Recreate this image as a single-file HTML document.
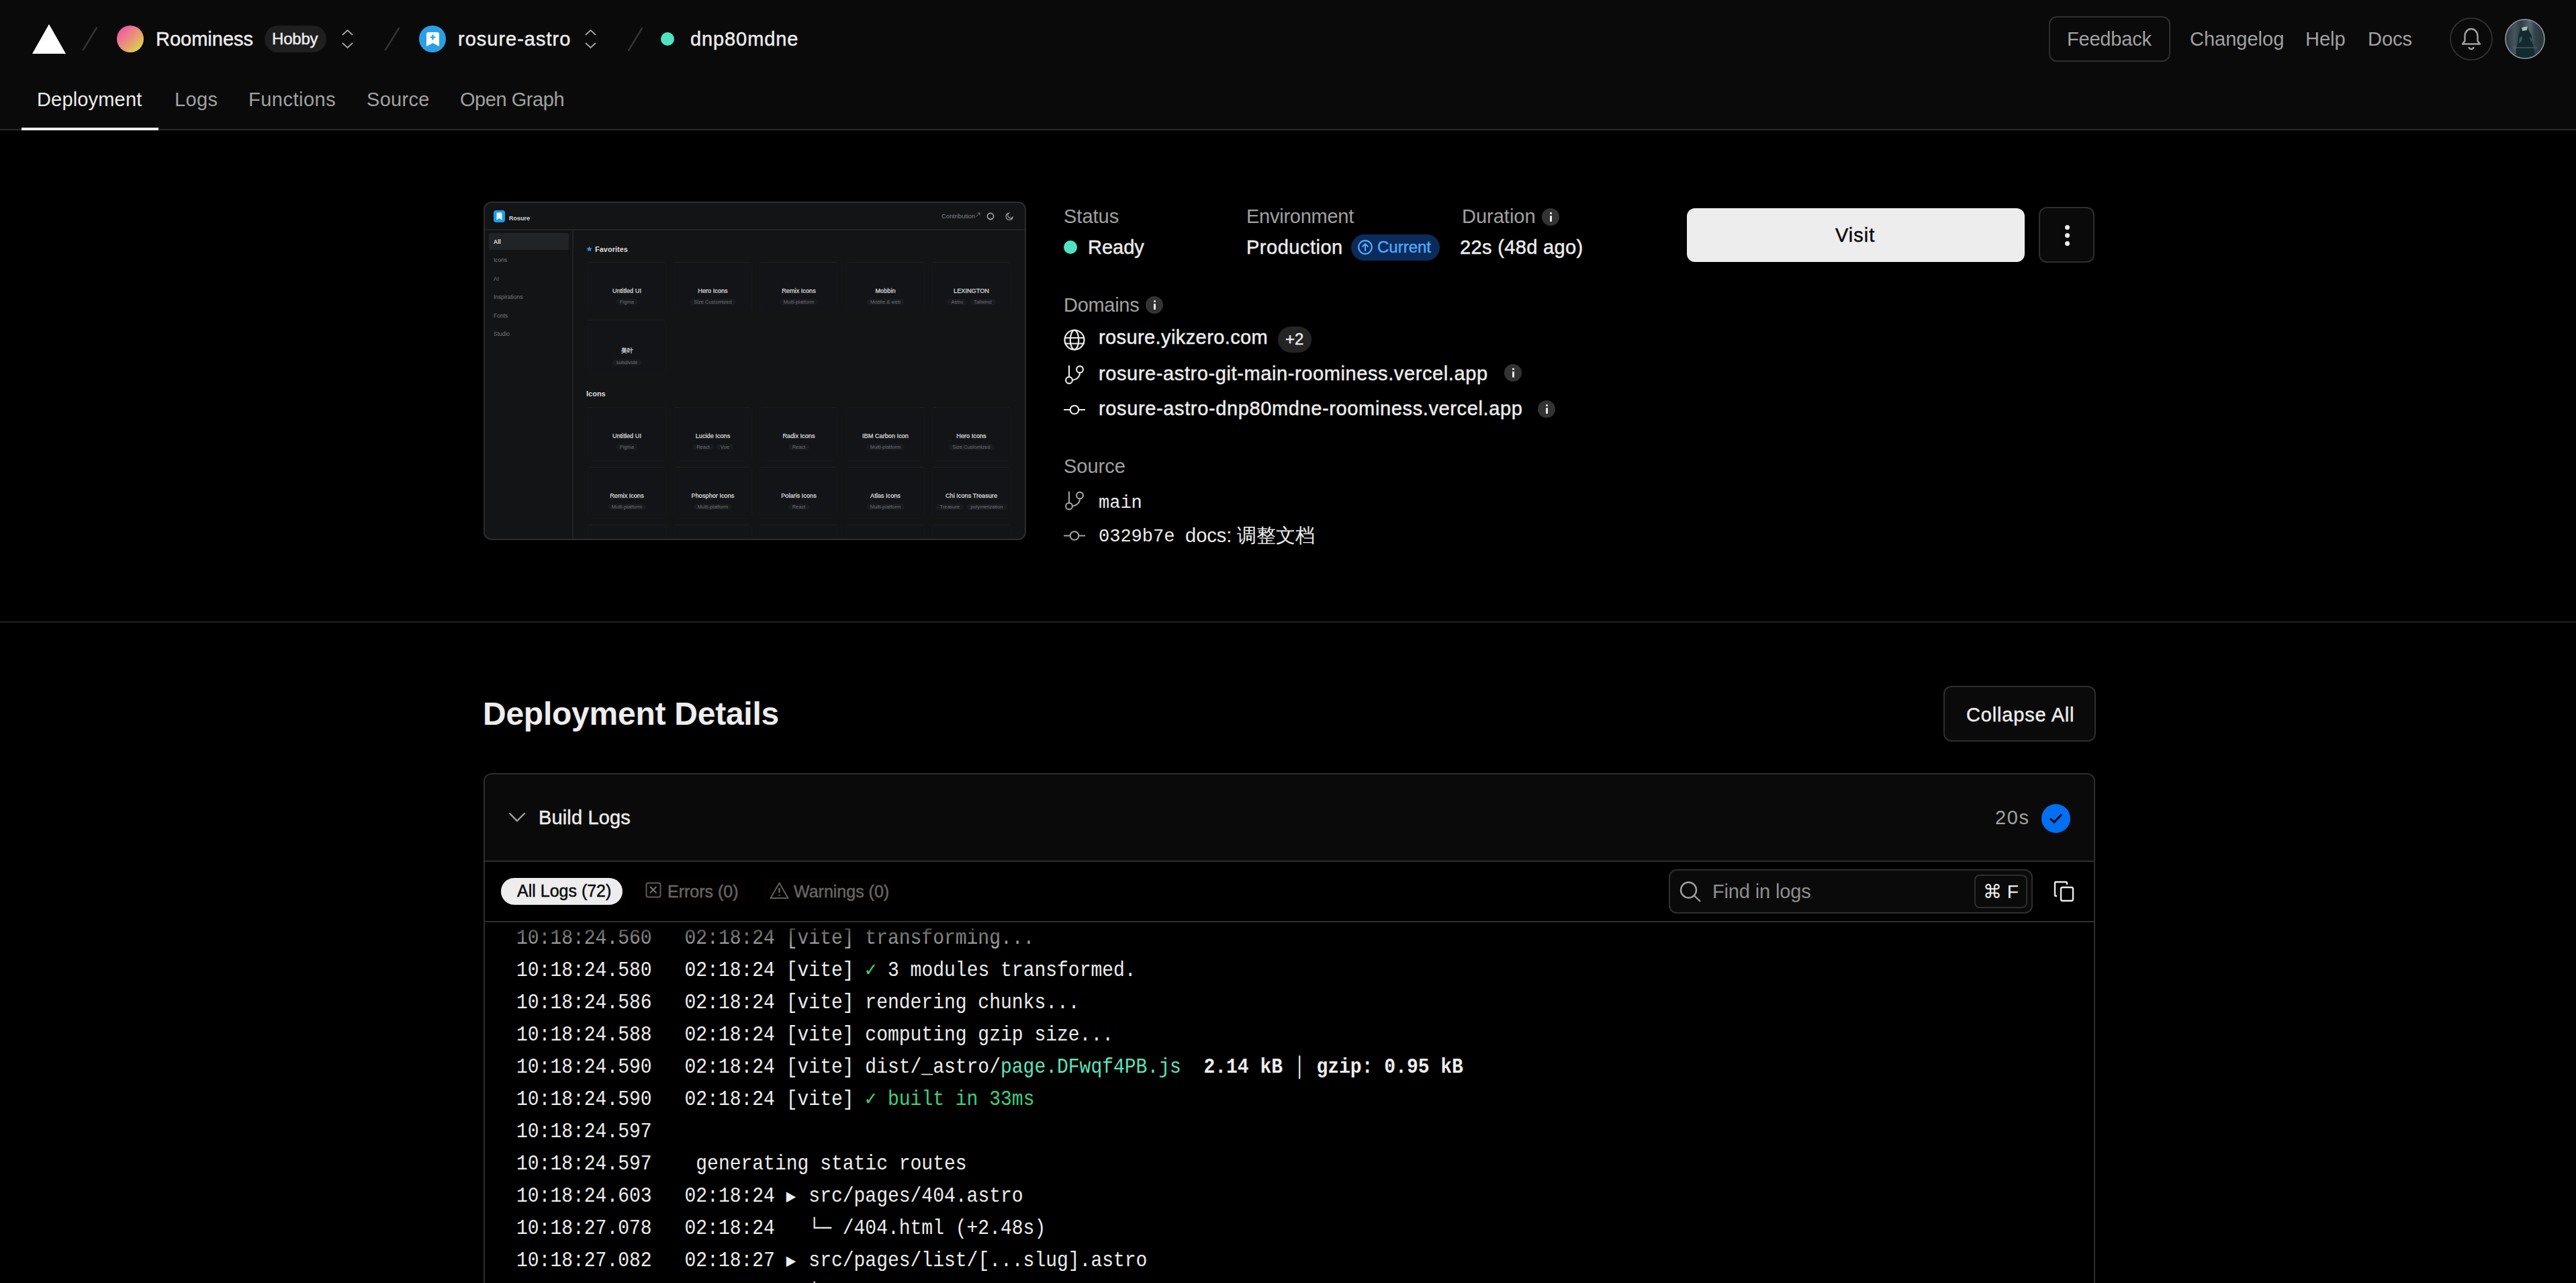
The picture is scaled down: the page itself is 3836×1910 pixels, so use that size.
<!DOCTYPE html>
<html><head><meta charset="utf-8">
<style>
*{box-sizing:border-box;margin:0;padding:0}
html,body{width:3836px;height:1910px;overflow:hidden;background:#000}
body{position:relative;font-family:"Liberation Sans",sans-serif;color:#ededed}
.a{position:absolute}
.t{position:absolute;line-height:1;white-space:pre}
.s28{font-size:29px}
.m{font-family:"Liberation Mono",monospace}
.md{-webkit-text-stroke:0.45px currentColor}
.g{color:#a1a1a1}
svg{position:absolute;overflow:visible}
#hdr{position:absolute;left:0;top:0;width:3836px;height:194px;background:#0a0a0a;border-bottom:2px solid #2e2e2e}
.info{position:absolute;width:26px;height:26px;border-radius:50%;background:#333}
.info:before{content:"";position:absolute;left:12px;top:6px;width:2.5px;height:2.5px;background:#ededed;border-radius:1px}
.info:after{content:"";position:absolute;left:12px;top:11px;width:2.5px;height:9px;background:#ededed;border-radius:1px}
.btn{position:absolute;border:2px solid #2e2e2e;border-radius:12px;background:#0a0a0a}
</style></head><body>

<div id="hdr">
  <!-- logo -->
  <svg style="left:0;top:0" width="10" height="10"><polygon points="73,36 98,80 48,80" fill="#fff"/></svg>
  <svg style="left:0;top:0" width="10" height="10"><line x1="144" y1="41" x2="124" y2="74" stroke="#333" stroke-width="2.5" stroke-linecap="round"/></svg>
  <div class="a" style="left:174px;top:38px;width:40px;height:40px;border-radius:50%;background:linear-gradient(135deg,#f545b8 0%,#e9907a 50%,#d6ea3c 100%)"></div>
  <div class="t md s28" style="left:232px;top:44px;letter-spacing:0px">Roominess</div>
  <div class="a" style="left:394px;top:38px;width:92px;height:40px;border-radius:20px;background:#1f1f1f"></div>
  <div class="t md" style="left:405px;top:46px;font-size:24px;letter-spacing:-0.2px">Hobby</div>
  <svg style="left:0;top:0" width="10" height="10"><polyline points="510,52 517.5,45 525,52" fill="none" stroke="#a1a1a1" stroke-width="2"/><polyline points="510,64 517.5,71 525,64" fill="none" stroke="#a1a1a1" stroke-width="2"/></svg>
  <svg style="left:0;top:0" width="10" height="10"><line x1="594" y1="42" x2="574" y2="74" stroke="#333" stroke-width="2.5" stroke-linecap="round"/></svg>
  <svg style="left:0;top:0" width="10" height="10"><circle cx="644" cy="58" r="20" fill="#2a9fe6"/><path d="M635,51 q0,-3 3,-3 h13 q3,0 3,3 v18 l-9.5,-5 l-9.5,5 z" fill="#fff"/><path d="M644.5,51.5 v8 M640.5,55.5 h8" stroke="#2a9fe6" stroke-width="2.2"/></svg>
  <div class="t md s28" style="left:682px;top:44px;letter-spacing:1px">rosure-astro</div>
  <svg style="left:0;top:0" width="10" height="10"><polyline points="872,52 879.5,45 887,52" fill="none" stroke="#a1a1a1" stroke-width="2"/><polyline points="872,64 879.5,71 887,64" fill="none" stroke="#a1a1a1" stroke-width="2"/></svg>
  <svg style="left:0;top:0" width="10" height="10"><line x1="956" y1="42" x2="936" y2="75" stroke="#333" stroke-width="2.5" stroke-linecap="round"/></svg>
  <div class="a" style="left:984px;top:48px;width:20px;height:20px;border-radius:50%;background:#50e3c2"></div>
  <div class="t md s28" style="left:1028px;top:44px;letter-spacing:0.9px">dnp80mdne</div>

  <!-- right -->
  <div class="btn" style="left:3051px;top:24px;width:181px;height:68px;background:#0a0a0a"></div>
  <div class="t s28 g" style="left:3078px;top:44px;letter-spacing:-0.2px">Feedback</div>
  <div class="t s28 g" style="left:3261px;top:44px">Changelog</div>
  <div class="t s28 g" style="left:3433px;top:44px">Help</div>
  <div class="t s28 g" style="left:3526px;top:44px">Docs</div>
  <div class="a" style="left:3648px;top:26px;width:64px;height:64px;border-radius:50%;border:2px solid #2e2e2e"></div>
  <svg style="left:0;top:0" width="10" height="10"><path d="M3667,65.5 h26 l-3.5,-4.5 v-7.5 a9.5,10.5 0 0 0 -19,0 v7.5 z" fill="none" stroke="#a1a1a1" stroke-width="2.4" stroke-linejoin="round"/><path d="M3676.5,70 a3.5,3 0 0 0 7,0" fill="none" stroke="#a1a1a1" stroke-width="2.4"/></svg>
  <svg style="left:3730px;top:28px" width="60" height="60" viewBox="0 0 60 60"><defs><linearGradient id="avbg" x1="0" x2="1" y1="0" y2="0"><stop offset="0" stop-color="#2a363d"/><stop offset="0.25" stop-color="#46545c"/><stop offset="0.4" stop-color="#2f3c44"/><stop offset="0.62" stop-color="#56666e"/><stop offset="0.75" stop-color="#34424a"/><stop offset="1" stop-color="#26323a"/></linearGradient><clipPath id="avc"><circle cx="30" cy="30" r="29.5"/></clipPath></defs>
<g clip-path="url(#avc)"><rect width="60" height="60" fill="url(#avbg)"/>
<path d="M24,13 L34,11 L36,18 L40,25 L41,36 L44,44 L45,60 L16,60 L17,44 L19,36 L20,26 Z" fill="#132a30"/>
<path d="M25,13 L34,11 L33,17 L26,18 Z" fill="#a9b8bc"/>
<path d="M22,28 L26,26 L25,33 L21,37Z M37,27 L41,30 L39,35Z" fill="#3c5c62"/>
<path d="M12,43 h36" stroke="#5e6e74" stroke-width="1"/>
</g><circle cx="30" cy="30" r="29" fill="none" stroke="#8d989c" stroke-width="1.6"/></svg>

  <!-- tabs -->
  <div class="t s28" style="left:55px;top:134px;letter-spacing:0.17px">Deployment</div>
  <div class="t s28 g" style="left:260px;top:134px;letter-spacing:0.4px">Logs</div>
  <div class="t s28 g" style="left:370px;top:134px;letter-spacing:0.5px">Functions</div>
  <div class="t s28 g" style="left:546px;top:134px;letter-spacing:0.3px">Source</div>
  <div class="t s28 g" style="left:685px;top:134px;letter-spacing:-0.45px">Open Graph</div>
  <div class="a" style="left:32px;top:190px;width:204px;height:4px;background:#ededed"></div>
</div>

<!-- PREVIEW -->
<div id="preview" class="a" style="left:720px;top:300px;width:808px;height:504px;border:2px solid #2c2c2c;border-radius:12px;background:#131416;overflow:hidden">
<div class="a" style="left:0.0px;top:39.0px;width:804.0px;height:1.5px;background:#222428"></div>
<div class="a" style="left:13.0px;top:11.0px;width:17.0px;height:18.0px;background:#1e9de8;border-radius:4px"></div>
<svg style="left:17px;top:14px" width="9" height="12"><path d="M0.5,1.5 q0,-1 1,-1 h6 q1,0 1,1 v10 l-4,-2.5 l-4,2.5z" fill="#e8f4fc"/></svg>
<div class="t" style="left:36.0px;top:19.4px;font-size:9px;color:#d8d8d8;font-weight:700;">Rosure</div>
<div class="t" style="left:680.0px;top:15.6px;font-size:9.3px;color:#7d7f83;font-weight:400;">Contribution</div>
<svg style="left:731px;top:14px" width="7" height="7"><path d="M0.5,6.5 L6,1 M2.5,1 h3.5 v3.5" stroke="#7d7f83" stroke-width="0.9" fill="none"/></svg>
<svg style="left:747px;top:14px" width="12" height="12"><circle cx="6" cy="6" r="4.6" fill="none" stroke="#a8aaad" stroke-width="1.6"/><path d="M4.3,11 v-2.5 M7.7,11 v-2.5" stroke="#a8aaad" stroke-width="1.2"/></svg>
<svg style="left:775px;top:14px" width="12" height="12"><path d="M5,1.5 a5,5 0 1 0 6,6 a4,4 0 0 1 -6,-6z" fill="none" stroke="#9a9c9f" stroke-width="1.3"/></svg>
<div class="a" style="left:130.0px;top:40.5px;width:1.5px;height:461.5px;background:#1f2124"></div>
<div class="a" style="left:6.0px;top:45.0px;width:119.0px;height:25.0px;background:#212427;border-radius:3px"></div>
<div class="t" style="left:13.0px;top:53.8px;font-size:8.5px;color:#e0e0e0;font-weight:600;">All</div>
<div class="t" style="left:13.0px;top:80.8px;font-size:8.5px;color:#74777b;font-weight:400;">Icons</div>
<div class="t" style="left:13.0px;top:108.8px;font-size:8.5px;color:#74777b;font-weight:400;">AI</div>
<div class="t" style="left:13.0px;top:135.8px;font-size:8.5px;color:#74777b;font-weight:400;">Inspirations</div>
<div class="t" style="left:13.0px;top:163.8px;font-size:8.5px;color:#74777b;font-weight:400;">Fonts</div>
<div class="t" style="left:13.0px;top:190.8px;font-size:8.5px;color:#74777b;font-weight:400;">Studio</div>
<svg style="left:151px;top:64px" width="10" height="10"><polygon points="4.5,0.5 5.8,3.3 8.8,3.5 6.5,5.4 7.3,8.5 4.5,6.8 1.7,8.5 2.5,5.4 0.2,3.5 3.2,3.3" fill="#2f8fe0"/></svg>
<div class="t" style="left:164.0px;top:63.7px;font-size:11px;color:#dcdcdc;font-weight:700;">Favorites</div>
<div class="t" style="left:151.0px;top:278.7px;font-size:11px;color:#dcdcdc;font-weight:700;">Icons</div>
<div class="a" style="left:153.0px;top:88.0px;width:117.0px;height:75.0px;border:1px solid #16171a;border-top-color:#1d1f22;border-radius:4px;background:#131417"></div>
<div class="t" style="left:111.5px;width:200px;text-align:center;top:127.2px;font-size:9.2px;color:#d2d3d4;font-weight:400;-webkit-text-stroke:0.3px #d2d3d4;">Untitled UI</div>
<div class="t" style="left:153.0px;width:117px;text-align:center;top:142.7px;font-size:7.5px"><span style="display:inline-block;padding:1px 6px;margin:0 2px;border-radius:6px;background:#191b1e;color:#6c6f73">Figma</span></div>
<div class="a" style="left:281.0px;top:88.0px;width:117.0px;height:75.0px;border:1px solid #16171a;border-top-color:#1d1f22;border-radius:4px;background:#131417"></div>
<div class="t" style="left:239.5px;width:200px;text-align:center;top:127.2px;font-size:9.2px;color:#d2d3d4;font-weight:400;-webkit-text-stroke:0.3px #d2d3d4;">Hero Icons</div>
<div class="t" style="left:281.0px;width:117px;text-align:center;top:142.7px;font-size:7.5px"><span style="display:inline-block;padding:1px 6px;margin:0 2px;border-radius:6px;background:#191b1e;color:#6c6f73">Size Customized</span></div>
<div class="a" style="left:409.0px;top:88.0px;width:117.0px;height:75.0px;border:1px solid #16171a;border-top-color:#1d1f22;border-radius:4px;background:#131417"></div>
<div class="t" style="left:367.5px;width:200px;text-align:center;top:127.2px;font-size:9.2px;color:#d2d3d4;font-weight:400;-webkit-text-stroke:0.3px #d2d3d4;">Remix Icons</div>
<div class="t" style="left:409.0px;width:117px;text-align:center;top:142.7px;font-size:7.5px"><span style="display:inline-block;padding:1px 6px;margin:0 2px;border-radius:6px;background:#191b1e;color:#6c6f73">Multi-platform</span></div>
<div class="a" style="left:538.0px;top:88.0px;width:117.0px;height:75.0px;border:1px solid #16171a;border-top-color:#1d1f22;border-radius:4px;background:#131417"></div>
<div class="t" style="left:496.5px;width:200px;text-align:center;top:127.2px;font-size:9.2px;color:#d2d3d4;font-weight:400;-webkit-text-stroke:0.3px #d2d3d4;">Mobbin</div>
<div class="t" style="left:538.0px;width:117px;text-align:center;top:142.7px;font-size:7.5px"><span style="display:inline-block;padding:1px 6px;margin:0 2px;border-radius:6px;background:#191b1e;color:#6c6f73">Mobile &amp; web</span></div>
<div class="a" style="left:666.0px;top:88.0px;width:117.0px;height:75.0px;border:1px solid #16171a;border-top-color:#1d1f22;border-radius:4px;background:#131417"></div>
<div class="t" style="left:624.5px;width:200px;text-align:center;top:127.2px;font-size:9.2px;color:#d2d3d4;font-weight:400;-webkit-text-stroke:0.3px #d2d3d4;">LEXINGTON</div>
<div class="t" style="left:666.0px;width:117px;text-align:center;top:142.7px;font-size:7.5px"><span style="display:inline-block;padding:1px 6px;margin:0 2px;border-radius:6px;background:#191b1e;color:#6c6f73">Astro</span><span style="display:inline-block;padding:1px 6px;margin:0 2px;border-radius:6px;background:#191b1e;color:#6c6f73">Tailwind</span></div>
<div class="a" style="left:153.0px;top:174.0px;width:117.0px;height:80.0px;border:1px solid #16171a;border-top-color:#1d1f22;border-radius:4px;background:#131417"></div>
<div class="t" style="left:111.5px;width:200px;text-align:center;top:216.2px;font-size:9.2px;color:#d2d3d4;font-weight:400;-webkit-text-stroke:0.3px #d2d3d4;">美叶</div>
<div class="t" style="left:153.0px;width:117px;text-align:center;top:232.7px;font-size:7.5px"><span style="display:inline-block;padding:1px 6px;margin:0 2px;border-radius:6px;background:#191b1e;color:#6c6f73">subdivide</span></div>
<div class="a" style="left:153.0px;top:304.0px;width:117.0px;height:80.0px;border:1px solid #16171a;border-top-color:#1d1f22;border-radius:4px;background:#131417"></div>
<div class="t" style="left:111.5px;width:200px;text-align:center;top:343.2px;font-size:9.2px;color:#d2d3d4;font-weight:400;-webkit-text-stroke:0.3px #d2d3d4;">Untitled UI</div>
<div class="t" style="left:153.0px;width:117px;text-align:center;top:358.7px;font-size:7.5px"><span style="display:inline-block;padding:1px 6px;margin:0 2px;border-radius:6px;background:#191b1e;color:#6c6f73">Figma</span></div>
<div class="a" style="left:281.0px;top:304.0px;width:117.0px;height:80.0px;border:1px solid #16171a;border-top-color:#1d1f22;border-radius:4px;background:#131417"></div>
<div class="t" style="left:239.5px;width:200px;text-align:center;top:343.2px;font-size:9.2px;color:#d2d3d4;font-weight:400;-webkit-text-stroke:0.3px #d2d3d4;">Lucide Icons</div>
<div class="t" style="left:281.0px;width:117px;text-align:center;top:358.7px;font-size:7.5px"><span style="display:inline-block;padding:1px 6px;margin:0 2px;border-radius:6px;background:#191b1e;color:#6c6f73">React</span><span style="display:inline-block;padding:1px 6px;margin:0 2px;border-radius:6px;background:#191b1e;color:#6c6f73">Vue</span></div>
<div class="a" style="left:409.0px;top:304.0px;width:117.0px;height:80.0px;border:1px solid #16171a;border-top-color:#1d1f22;border-radius:4px;background:#131417"></div>
<div class="t" style="left:367.5px;width:200px;text-align:center;top:343.2px;font-size:9.2px;color:#d2d3d4;font-weight:400;-webkit-text-stroke:0.3px #d2d3d4;">Radix Icons</div>
<div class="t" style="left:409.0px;width:117px;text-align:center;top:358.7px;font-size:7.5px"><span style="display:inline-block;padding:1px 6px;margin:0 2px;border-radius:6px;background:#191b1e;color:#6c6f73">React</span></div>
<div class="a" style="left:538.0px;top:304.0px;width:117.0px;height:80.0px;border:1px solid #16171a;border-top-color:#1d1f22;border-radius:4px;background:#131417"></div>
<div class="t" style="left:496.5px;width:200px;text-align:center;top:343.2px;font-size:9.2px;color:#d2d3d4;font-weight:400;-webkit-text-stroke:0.3px #d2d3d4;">IBM Carbon Icon</div>
<div class="t" style="left:538.0px;width:117px;text-align:center;top:358.7px;font-size:7.5px"><span style="display:inline-block;padding:1px 6px;margin:0 2px;border-radius:6px;background:#191b1e;color:#6c6f73">Multi-platform</span></div>
<div class="a" style="left:666.0px;top:304.0px;width:117.0px;height:80.0px;border:1px solid #16171a;border-top-color:#1d1f22;border-radius:4px;background:#131417"></div>
<div class="t" style="left:624.5px;width:200px;text-align:center;top:343.2px;font-size:9.2px;color:#d2d3d4;font-weight:400;-webkit-text-stroke:0.3px #d2d3d4;">Hero Icons</div>
<div class="t" style="left:666.0px;width:117px;text-align:center;top:358.7px;font-size:7.5px"><span style="display:inline-block;padding:1px 6px;margin:0 2px;border-radius:6px;background:#191b1e;color:#6c6f73">Size Customized</span></div>
<div class="a" style="left:153.0px;top:393.0px;width:117.0px;height:77.0px;border:1px solid #16171a;border-top-color:#1d1f22;border-radius:4px;background:#131417"></div>
<div class="t" style="left:111.5px;width:200px;text-align:center;top:432.2px;font-size:9.2px;color:#d2d3d4;font-weight:400;-webkit-text-stroke:0.3px #d2d3d4;">Remix Icons</div>
<div class="t" style="left:153.0px;width:117px;text-align:center;top:447.7px;font-size:7.5px"><span style="display:inline-block;padding:1px 6px;margin:0 2px;border-radius:6px;background:#191b1e;color:#6c6f73">Multi-platform</span></div>
<div class="a" style="left:281.0px;top:393.0px;width:117.0px;height:77.0px;border:1px solid #16171a;border-top-color:#1d1f22;border-radius:4px;background:#131417"></div>
<div class="t" style="left:239.5px;width:200px;text-align:center;top:432.2px;font-size:9.2px;color:#d2d3d4;font-weight:400;-webkit-text-stroke:0.3px #d2d3d4;">Phosphor Icons</div>
<div class="t" style="left:281.0px;width:117px;text-align:center;top:447.7px;font-size:7.5px"><span style="display:inline-block;padding:1px 6px;margin:0 2px;border-radius:6px;background:#191b1e;color:#6c6f73">Multi-platform</span></div>
<div class="a" style="left:409.0px;top:393.0px;width:117.0px;height:77.0px;border:1px solid #16171a;border-top-color:#1d1f22;border-radius:4px;background:#131417"></div>
<div class="t" style="left:367.5px;width:200px;text-align:center;top:432.2px;font-size:9.2px;color:#d2d3d4;font-weight:400;-webkit-text-stroke:0.3px #d2d3d4;">Polaris Icons</div>
<div class="t" style="left:409.0px;width:117px;text-align:center;top:447.7px;font-size:7.5px"><span style="display:inline-block;padding:1px 6px;margin:0 2px;border-radius:6px;background:#191b1e;color:#6c6f73">React</span></div>
<div class="a" style="left:538.0px;top:393.0px;width:117.0px;height:77.0px;border:1px solid #16171a;border-top-color:#1d1f22;border-radius:4px;background:#131417"></div>
<div class="t" style="left:496.5px;width:200px;text-align:center;top:432.2px;font-size:9.2px;color:#d2d3d4;font-weight:400;-webkit-text-stroke:0.3px #d2d3d4;">Atlas Icons</div>
<div class="t" style="left:538.0px;width:117px;text-align:center;top:447.7px;font-size:7.5px"><span style="display:inline-block;padding:1px 6px;margin:0 2px;border-radius:6px;background:#191b1e;color:#6c6f73">Multi-platform</span></div>
<div class="a" style="left:666.0px;top:393.0px;width:117.0px;height:77.0px;border:1px solid #16171a;border-top-color:#1d1f22;border-radius:4px;background:#131417"></div>
<div class="t" style="left:624.5px;width:200px;text-align:center;top:432.2px;font-size:9.2px;color:#d2d3d4;font-weight:400;-webkit-text-stroke:0.3px #d2d3d4;">Chi Icons Treasure</div>
<div class="t" style="left:666.0px;width:117px;text-align:center;top:447.7px;font-size:7.5px"><span style="display:inline-block;padding:1px 6px;margin:0 2px;border-radius:6px;background:#191b1e;color:#6c6f73">Treasure</span><span style="display:inline-block;padding:1px 6px;margin:0 2px;border-radius:6px;background:#191b1e;color:#6c6f73">polymerization</span></div>
<div class="a" style="left:153.0px;top:479.0px;width:117.0px;height:49.0px;border:1px solid #16171a;border-top-color:#1d1f22;border-radius:4px;background:#131417"></div>
<div class="a" style="left:281.0px;top:479.0px;width:117.0px;height:49.0px;border:1px solid #16171a;border-top-color:#1d1f22;border-radius:4px;background:#131417"></div>
<div class="a" style="left:409.0px;top:479.0px;width:117.0px;height:49.0px;border:1px solid #16171a;border-top-color:#1d1f22;border-radius:4px;background:#131417"></div>
<div class="a" style="left:538.0px;top:479.0px;width:117.0px;height:49.0px;border:1px solid #16171a;border-top-color:#1d1f22;border-radius:4px;background:#131417"></div>
<div class="a" style="left:666.0px;top:479.0px;width:117.0px;height:49.0px;border:1px solid #16171a;border-top-color:#1d1f22;border-radius:4px;background:#131417"></div>
</div>

<!-- INFO -->
<div class="t s28 g" style="left:1584px;top:308px">Status</div>
<div class="t s28 g" style="left:1856px;top:308px;letter-spacing:-0.25px">Environment</div>
<div class="t s28 g" style="left:2177px;top:308px">Duration</div>
<div class="info" style="left:2296px;top:310px"></div>

<div class="a" style="left:1584px;top:358px;width:20px;height:20px;border-radius:50%;background:#50e3c2"></div>
<div class="t md s28" style="left:1620px;top:354px;letter-spacing:0px">Ready</div>
<div class="t md s28" style="left:1856px;top:354px;letter-spacing:0.5px">Production</div>
<div class="a" style="left:2012px;top:349px;width:132px;height:39px;border-radius:20px;background:#0b2c5a"></div>
<svg style="left:0;top:0" width="10" height="10"><circle cx="2033" cy="368" r="9.8" fill="none" stroke="#52a8ff" stroke-width="2.2"/><path d="M2033,374 v-11 M2028.5,367.5 l4.5,-4.5 l4.5,4.5" fill="none" stroke="#52a8ff" stroke-width="2.2"/></svg>
<div class="t md" style="left:2051px;top:356px;font-size:24px;color:#52a8ff;letter-spacing:0px">Current</div>
<div class="t md s28" style="left:2174px;top:354px;letter-spacing:0.35px">22s (48d ago)</div>

<div class="t s28 g" style="left:1584px;top:440px;letter-spacing:-0.3px">Domains</div>
<div class="info" style="left:1706px;top:441px"></div>

<svg style="left:0;top:0" width="10" height="10"><g fill="none" stroke="#ededed" stroke-width="2.2"><circle cx="1600" cy="506" r="14.5"/><ellipse cx="1600" cy="506" rx="6.2" ry="14.5"/><path d="M1585.5,503 h29 M1585.5,511.5 h29"/></g></svg>
<div class="t md s28" style="left:1636px;top:488px;letter-spacing:0.4px">rosure.yikzero.com</div>
<div class="a" style="left:1903px;top:486px;width:50px;height:39px;border-radius:20px;background:#242424"></div>
<div class="t md" style="left:1914px;top:493px;font-size:24px">+2</div>

<svg style="left:0;top:0" width="10" height="10"><g fill="none" stroke="#ededed" stroke-width="2.1"><circle cx="1592" cy="566" r="4.9"/><circle cx="1608" cy="550" r="4.9"/><path d="M1592,561 v-17 M1608,555 q0,9 -11,11"/></g></svg>
<div class="t md s28" style="left:1636px;top:542px;letter-spacing:0.6px">rosure-astro-git-main-roominess.vercel.app</div>
<div class="info" style="left:2240px;top:542px"></div>

<svg style="left:0;top:0" width="10" height="10"><g fill="none" stroke="#ededed" stroke-width="2.1"><circle cx="1600" cy="610" r="6.3"/><path d="M1584,610 h9.6 M1606.4,610 h9.6"/></g></svg>
<div class="t md s28" style="left:1636px;top:594px;letter-spacing:0.63px">rosure-astro-dnp80mdne-roominess.vercel.app</div>
<div class="info" style="left:2290px;top:596px"></div>

<div class="t s28 g" style="left:1584px;top:680px">Source</div>
<svg style="left:0;top:0" width="10" height="10"><g fill="none" stroke="#a1a1a1" stroke-width="2.1"><circle cx="1592" cy="753.5" r="4.9"/><circle cx="1608" cy="737.5" r="4.9"/><path d="M1592,748.5 v-17 M1608,742.5 q0,9 -11,11"/></g></svg>
<div class="t m" style="left:1636px;top:736px;font-size:27px">main</div>
<svg style="left:0;top:0" width="10" height="10"><g fill="none" stroke="#a1a1a1" stroke-width="2.1"><circle cx="1600" cy="797.5" r="6.3"/><path d="M1584,797.5 h9.6 M1606.4,797.5 h9.6"/></g></svg>
<div class="t m" style="left:1636px;top:786px;font-size:27px">0329b7e</div>
<div class="t s28" style="left:1765px;top:783px;letter-spacing:0px">docs: 调整文档</div>

<!-- visit -->
<div class="a" style="left:2512px;top:310px;width:503px;height:80px;border-radius:12px;background:#ededed"></div>
<div class="t md s28" style="left:2733px;top:336px;color:#0a0a0a;letter-spacing:1px">Visit</div>
<div class="btn" style="left:3036px;top:308px;width:83px;height:83px"></div>
<div class="a" style="left:3075px;top:335px;width:7px;height:7px;border-radius:50%;background:#ededed"></div>
<div class="a" style="left:3075px;top:347px;width:7px;height:7px;border-radius:50%;background:#ededed"></div>
<div class="a" style="left:3075px;top:359px;width:7px;height:7px;border-radius:50%;background:#ededed"></div>

<div class="a" style="left:0;top:925px;width:3836px;height:2px;background:#222"></div>

<!-- DETAILS -->
<div class="t" style="left:719px;top:1039px;font-size:48px;font-weight:700;letter-spacing:-0.25px">Deployment Details</div>
<div class="btn" style="left:2894px;top:1021px;width:227px;height:83px"></div>
<div class="t md s28" style="left:2928px;top:1050px;letter-spacing:0.82px">Collapse All</div>

<div id="box" class="a" style="left:720px;top:1151px;width:2400px;height:800px;border:2px solid #2e2e2e;border-radius:12px;overflow:hidden;background:#000">
<div class="a" style="left:0;top:0;width:2397px;height:130px;background:#0a0a0a;border-bottom:2px solid #2e2e2e"></div>
<div class="a" style="left:0;top:218px;width:2397px;height:2px;background:#2e2e2e"></div>
</div>
<svg style="left:0;top:0" width="10" height="10"><polyline points="758.5,1210.5 770,1222 781.5,1210.5" fill="none" stroke="#a1a1a1" stroke-width="2.4"/></svg>
<div class="t md s28" style="left:802px;top:1203px;letter-spacing:0.15px">Build Logs</div>
<div class="t s28 g" style="left:2971px;top:1203px;letter-spacing:1.6px">20s</div>
<div class="a" style="left:3040px;top:1197px;width:43px;height:43px;border-radius:50%;background:#0070f3"></div>
<svg style="left:0;top:0" width="10" height="10"><polyline points="3053,1218.5 3059,1224 3070,1212.5" fill="none" stroke="#000" stroke-width="3"/></svg>

<div class="a" style="left:746px;top:1307px;width:181px;height:40px;border-radius:20px;background:#ededed"></div>
<div class="t md" style="left:770px;top:1313.5px;font-size:25px;color:#0a0a0a;letter-spacing:0px">All Logs (72)</div>
<div class="a" style="left:948px;top:1307px;width:163px;height:40px;border-radius:8px;background:rgba(70,0,0,0.07)"></div>
<svg style="left:0;top:0" width="10" height="10"><rect x="962.5" y="1314.5" width="21" height="21" rx="3" fill="none" stroke="#5a5a5a" stroke-width="2"/><path d="M968,1320 l9.5,9.5 M977.5,1320 l-9.5,9.5" stroke="#777" stroke-width="1.8"/></svg>
<div class="t md" style="left:994px;top:1314.5px;font-size:25px;color:#666">Errors (0)</div>
<div class="a" style="left:1137px;top:1307px;width:191px;height:40px;border-radius:8px;background:rgba(60,30,0,0.06)"></div>
<svg style="left:0;top:0" width="10" height="10"><path d="M1160.5,1314.5 L1173.5,1337 H1147.5 Z" fill="none" stroke="#5e5e5e" stroke-width="2" stroke-linejoin="round"/><path d="M1160.5,1322 v7 M1160.5,1332 v1.5" stroke="#777" stroke-width="2"/></svg>
<div class="t md" style="left:1182px;top:1314.5px;font-size:25px;color:#666">Warnings (0)</div>

<div class="btn" style="left:2485px;top:1294px;width:542px;height:66px"></div>
<svg style="left:0;top:0" width="10" height="10"><circle cx="2514.5" cy="1325" r="11.5" fill="none" stroke="#a1a1a1" stroke-width="2.4"/><path d="M2523,1333.5 L2532,1342" stroke="#a1a1a1" stroke-width="2.4"/></svg>
<div class="t s28" style="left:2550px;top:1313px;color:#8f8f8f;letter-spacing:-0.15px">Find in logs</div>
<div class="a" style="left:2940px;top:1302px;width:79px;height:50px;border:2px solid #2e2e2e;border-radius:8px"></div>
<div class="t" style="left:2953px;top:1314px;font-size:28px;color:#ededed">⌘ F</div>
<svg style="left:0;top:0" width="10" height="10"><g fill="none" stroke="#ededed" stroke-width="2.4" stroke-linejoin="round"><rect x="3069" y="1321" width="18" height="20" rx="2.5"/><path d="M3063,1334 h-1 a2,2 0 0 1 -2,-2 v-17 a2,2 0 0 1 2,-2 h14 a2,2 0 0 1 2,2 v2"/></g></svg>
<div id="logs" class="a" style="left:722px;top:1373px;width:2396px;height:537px;overflow:hidden">
<div class="a" style="left:-722px;top:-1373px;width:3836px;height:1910px">
<div class="t m" style="left:769px;top:1383.85px;font-size:28px;transform:scaleY(1.09);transform-origin:0 21.45px">10:18:24.560</div>
<div class="t m" style="left:1019.5px;top:1383.85px;font-size:28px;transform:scaleY(1.09);transform-origin:0 21.45px"><span style="color:#ededed;">02:18:24 [vite] transforming...</span></div>
<div class="t m" style="left:769px;top:1431.85px;font-size:28px;transform:scaleY(1.09);transform-origin:0 21.45px">10:18:24.580</div>
<div class="t m" style="left:1019.5px;top:1431.85px;font-size:28px;transform:scaleY(1.09);transform-origin:0 21.45px"><span style="color:#ededed;">02:18:24 [vite] </span><span style="color:#3fcf80;">✓</span><span style="color:#ededed;"> 3 modules transformed.</span></div>
<div class="t m" style="left:769px;top:1479.85px;font-size:28px;transform:scaleY(1.09);transform-origin:0 21.45px">10:18:24.586</div>
<div class="t m" style="left:1019.5px;top:1479.85px;font-size:28px;transform:scaleY(1.09);transform-origin:0 21.45px"><span style="color:#ededed;">02:18:24 [vite] rendering chunks...</span></div>
<div class="t m" style="left:769px;top:1527.85px;font-size:28px;transform:scaleY(1.09);transform-origin:0 21.45px">10:18:24.588</div>
<div class="t m" style="left:1019.5px;top:1527.85px;font-size:28px;transform:scaleY(1.09);transform-origin:0 21.45px"><span style="color:#ededed;">02:18:24 [vite] computing gzip size...</span></div>
<div class="t m" style="left:769px;top:1575.85px;font-size:28px;transform:scaleY(1.09);transform-origin:0 21.45px">10:18:24.590</div>
<div class="t m" style="left:1019.5px;top:1575.85px;font-size:28px;transform:scaleY(1.09);transform-origin:0 21.45px"><span style="color:#ededed;">02:18:24 [vite] dist/_astro/</span><span style="color:#5ee3bd;">page.DFwqf4PB.js</span><span style="color:#ededed;">  </span><span style="color:#ededed;font-weight:700;">2.14 kB │ gzip: 0.95 kB</span></div>
<div class="t m" style="left:769px;top:1623.85px;font-size:28px;transform:scaleY(1.09);transform-origin:0 21.45px">10:18:24.590</div>
<div class="t m" style="left:1019.5px;top:1623.85px;font-size:28px;transform:scaleY(1.09);transform-origin:0 21.45px"><span style="color:#ededed;">02:18:24 [vite] </span><span style="color:#3fcf80;">✓ built in 33ms</span></div>
<div class="t m" style="left:769px;top:1671.85px;font-size:28px;transform:scaleY(1.09);transform-origin:0 21.45px">10:18:24.597</div>
<div class="t m" style="left:769px;top:1719.85px;font-size:28px;transform:scaleY(1.09);transform-origin:0 21.45px">10:18:24.597</div>
<div class="t m" style="left:1019.5px;top:1719.85px;font-size:28px;transform:scaleY(1.09);transform-origin:0 21.45px"><span style="color:#ededed;"> generating static routes</span></div>
<div class="t m" style="left:769px;top:1767.85px;font-size:28px;transform:scaleY(1.09);transform-origin:0 21.45px">10:18:24.603</div>
<div class="t m" style="left:1019.5px;top:1767.85px;font-size:28px;transform:scaleY(1.09);transform-origin:0 21.45px"><span style="color:#ededed;">02:18:24 <span style="display:inline-block;width:16.8px;font-size:24px">▶</span> src/pages/404.astro</span></div>
<div class="t m" style="left:769px;top:1815.85px;font-size:28px;transform:scaleY(1.09);transform-origin:0 21.45px">10:18:27.078</div>
<div class="t m" style="left:1019.5px;top:1815.85px;font-size:28px;transform:scaleY(1.09);transform-origin:0 21.45px"><span style="color:#ededed;">02:18:24   └─ /404.html (+2.48s)</span></div>
<div class="t m" style="left:769px;top:1863.85px;font-size:28px;transform:scaleY(1.09);transform-origin:0 21.45px">10:18:27.082</div>
<div class="t m" style="left:1019.5px;top:1863.85px;font-size:28px;transform:scaleY(1.09);transform-origin:0 21.45px"><span style="color:#ededed;">02:18:27 <span style="display:inline-block;width:16.8px;font-size:24px">▶</span> src/pages/list/[...slug].astro</span></div>
<div class="t m" style="left:769px;top:1911.85px;font-size:28px;transform:scaleY(1.09);transform-origin:0 21.45px">10:18:27.090</div>
<div class="t m" style="left:1019.5px;top:1911.85px;font-size:28px;transform:scaleY(1.09);transform-origin:0 21.45px"><span style="color:#ededed;">02:18:27   └─ /list/index.html (+0.01s)</span></div>
</div>
<div class="a" style="left:0;top:0;width:2396px;height:60px;background:linear-gradient(#000 0%,rgba(0,0,0,0.55) 25%,rgba(0,0,0,0) 100%)"></div>
</div>

</body></html>
